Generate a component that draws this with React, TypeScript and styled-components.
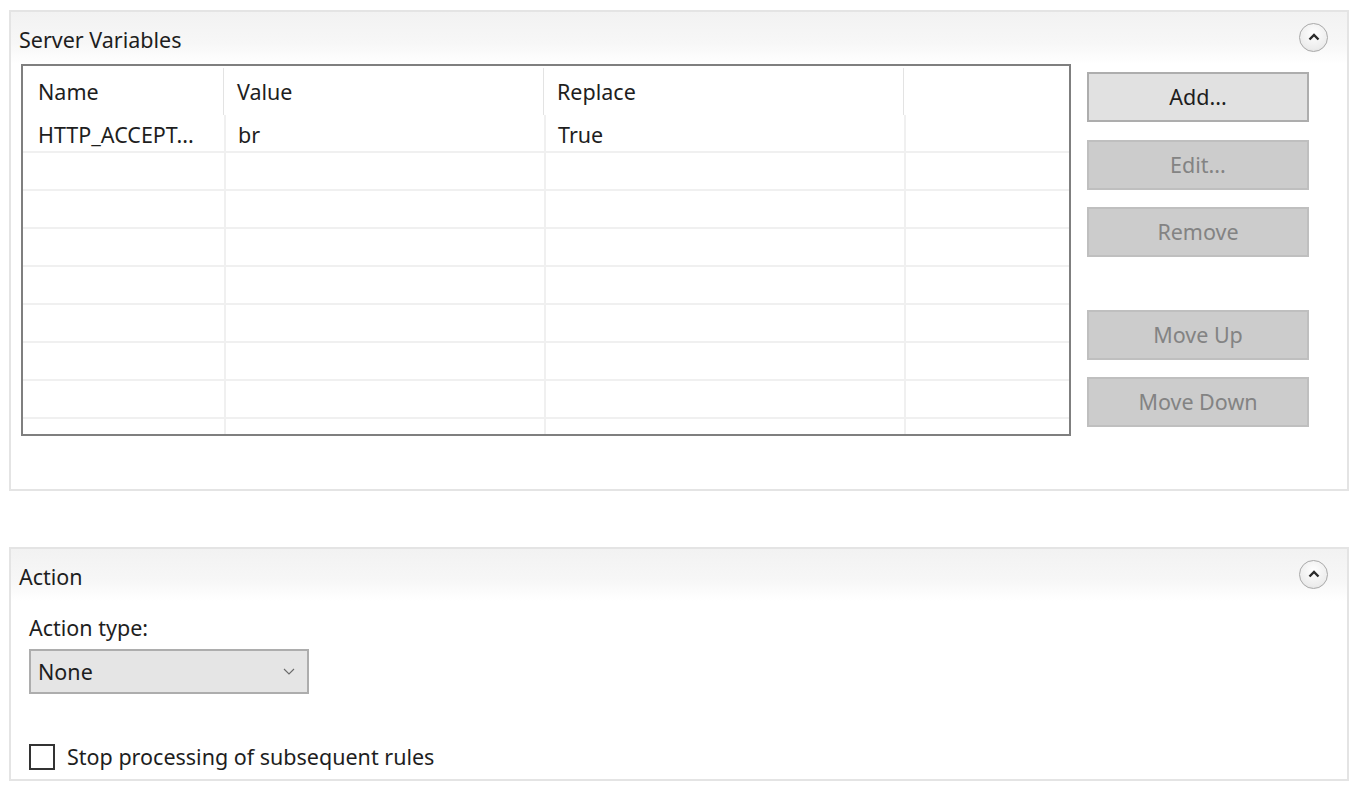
import React from 'react';
import styled, {createGlobalStyle} from 'styled-components';

const GlobalStyle = createGlobalStyle`
    html, body {
        margin: 0;
        padding: 0;
        background: #ffffff;
    }
    body {
        font-family: 'Noto Sans', 'Open Sans', sans-serif;
        color: #1e1e1e;
    }
`

const Page = styled.div`
    width: 1360px;
    height: 793px;
    padding: 10px 0 0 9px;
    box-sizing: border-box;
    display: flex;
    flex-direction: column;
    gap: 56px;
`
const Panel = styled.section<{ $height: number }>`
    width: 1340px;
    height: ${p => p.$height}px;
    box-sizing: border-box;
    border: 2px solid #e4e4e4;
    display: flex;
    flex-direction: column;
`
const PanelHeader = styled.div`
    height: 52px;
    flex-shrink: 0;
    display: flex;
    align-items: center;
    justify-content: space-between;
    padding: 2px 19px 0 8px;
    box-sizing: border-box;
    background: linear-gradient(to bottom, #f2f2f2 0%, #f7f7f7 60%, #ffffff 100%);
`
const Title = styled.span`
    font-size: 21.5px;
    color: #1e1e1e;
`
const CollapseButton = styled.button`
    width: 29px;
    height: 29px;
    margin-top: -4px;
    border-radius: 50%;
    border: 1px solid #a9a9a9;
    background: radial-gradient(circle at 50% 35%, #ffffff 0%, #ececec 70%, #d4d4d4 100%);
    display: flex;
    align-items: center;
    justify-content: center;
    padding: 0;
    cursor: pointer;
`
const Body = styled.div`
    display: flex;
    align-items: flex-start;
    gap: 16px;
    padding: 0 0 0 10px;
`
const Table = styled.div`
    width: 1050px;
    height: 372px;
    box-sizing: border-box;
    border: 2px solid #7f7f7f;
    overflow: hidden;
    background: #ffffff;
`
const HeaderRow = styled.div`
    display: grid;
    grid-template-columns: 201px 320px 360px 1fr;
    height: 49px;
`
const HeaderCell = styled.div<{ $last?: boolean }>`
    display: flex;
    align-items: center;
    padding-left: 13px;
    font-size: 21.5px;
    color: #1e1e1e;
    margin-top: 2px;
    border-right: ${p => (p.$last ? 'none' : '1px solid #e3e3e3')};
    &:first-child {
        padding-left: 15px;
    }
`
const Row = styled.div`
    display: grid;
    grid-template-columns: 203px 320px 360px 160px;
    height: 38px;
    box-sizing: border-box;
    border-bottom: 2px solid #f0f0f0;
`
const Cell = styled.div`
    display: flex;
    align-items: center;
    padding: 3px 0 0 12px;
    font-size: 21.5px;
    color: #1e1e1e;
    border-right: 2px solid #f0f0f0;
    white-space: nowrap;
    overflow: hidden;
    &:first-child {
        padding-left: 15px;
    }
    &:last-child {
        border-right: none;
    }
`
const ButtonColumn = styled.div`
    display: flex;
    flex-direction: column;
    padding-top: 8px;
`
const ActionButton = styled.button<{ $disabled?: boolean; $gap: number }>`
    width: 222px;
    height: 50px;
    margin-top: ${p => p.$gap}px;
    box-sizing: border-box;
    border: 2px solid ${p => (p.$disabled ? '#bfbfbf' : '#adadad')};
    background: ${p => (p.$disabled ? '#cccccc' : '#e1e1e1')};
    color: ${p => (p.$disabled ? '#838383' : '#1e1e1e')};
    font-family: 'Noto Sans', 'Open Sans', sans-serif;
    font-size: 21.5px;
    padding: 0 0 2px;
    cursor: ${p => (p.$disabled ? 'default' : 'pointer')};
`
const ActionBody = styled.div`
    display: flex;
    flex-direction: column;
    padding: 0 0 0 18px;
`
const FieldLabel = styled.label`
    font-size: 21.5px;
    color: #1e1e1e;
    height: 26px;
    display: flex;
    align-items: center;
    margin-top: 13px;
`
const Select = styled.div`
    width: 280px;
    height: 45px;
    margin-top: 9px;
    box-sizing: border-box;
    border: 2px solid #adadad;
    background: #e5e5e5;
    display: flex;
    align-items: center;
    justify-content: space-between;
    padding: 0 12px 0 7px;
    font-size: 21.5px;
    color: #1e1e1e;
`
const CheckRow = styled.label`
    display: flex;
    align-items: center;
    gap: 12px;
    margin-top: 48px;
    font-size: 21.5px;
    color: #1e1e1e;
`
const CheckBox = styled.span`
    width: 26px;
    height: 26px;
    box-sizing: border-box;
    border: 2px solid #333333;
    background: #ffffff;
`

const Chevron = () => (
    <svg width="12" height="8" viewBox="0 0 12 8">
        <path d="M1.5 6.5 L6 2 L10.5 6.5" fill="none" stroke="#2b2b2b" strokeWidth="2.4" />
    </svg>
)

const rows = [
    ['HTTP_ACCEPT...', 'br', 'True', ''],
    ...Array.from({ length: 8 }, () => ['', '', '', '']),
]

const App = () => (
    <>
        <GlobalStyle />
        <Page>
            <Panel $height={481}>
                <PanelHeader>
                    <Title>Server Variables</Title>
                    <CollapseButton aria-label="Collapse"><Chevron /></CollapseButton>
                </PanelHeader>
                <Body>
                    <Table>
                        <HeaderRow>
                            <HeaderCell>Name</HeaderCell>
                            <HeaderCell>Value</HeaderCell>
                            <HeaderCell>Replace</HeaderCell>
                            <HeaderCell $last></HeaderCell>
                        </HeaderRow>
                        {rows.map((r, i) => (
                            <Row key={i}>
                                {r.map((c, j) => <Cell key={j}>{c}</Cell>)}
                            </Row>
                        ))}
                    </Table>
                    <ButtonColumn>
                        <ActionButton $gap={0}>Add...</ActionButton>
                        <ActionButton $gap={18} $disabled>Edit...</ActionButton>
                        <ActionButton $gap={17} $disabled>Remove</ActionButton>
                        <ActionButton $gap={53} $disabled>Move Up</ActionButton>
                        <ActionButton $gap={17} $disabled>Move Down</ActionButton>
                    </ButtonColumn>
                </Body>
            </Panel>
            <Panel $height={234}>
                <PanelHeader>
                    <Title>Action</Title>
                    <CollapseButton aria-label="Collapse"><Chevron /></CollapseButton>
                </PanelHeader>
                <ActionBody>
                    <FieldLabel>Action type:</FieldLabel>
                    <Select>
                        <span>None</span>
                        <svg width="12" height="7" viewBox="0 0 12 7">
                            <path d="M1 1 L6 6 L11 1" fill="none" stroke="#6a6a6a" strokeWidth="1.1" />
                        </svg>
                    </Select>
                    <CheckRow>
                        <CheckBox />
                        Stop processing of subsequent rules
                    </CheckRow>
                </ActionBody>
            </Panel>
        </Page>
    </>
)

export default App;
